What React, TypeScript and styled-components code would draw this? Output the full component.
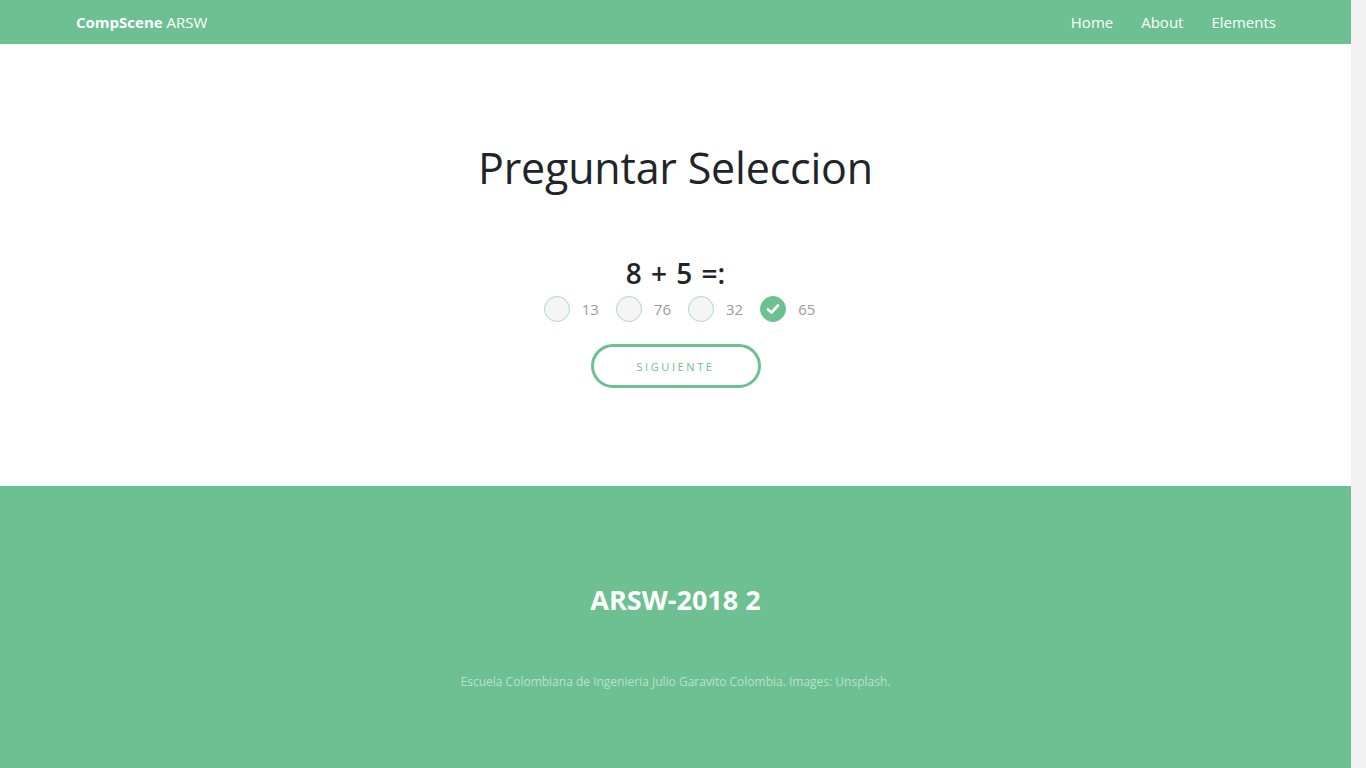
import React, { useState } from "react";
import styled, { createGlobalStyle } from "styled-components";

const green = "#6cc091";

const Global = createGlobalStyle`
  html { background: #f1f1f1; }
  html, body { margin: 0; padding: 0; }
  body {
    margin-right: 15px;
    font-family: "Open Sans", "Noto Sans", sans-serif;
    background: #fff;
    color: #212529;
  }
  * { box-sizing: border-box; }
`;

const Page = styled.div`
  display: flex;
  flex-direction: column;
  min-height: 813px;
`;

const Navbar = styled.header`
  height: 44px;
  background: ${green};
  display: flex;
  align-items: center;
  justify-content: space-between;
  padding: 0 75px 0 76px;
`;

const Brand = styled.a`
  color: #fff;
  font-size: 15px;
  text-decoration: none;
  b { font-weight: 700; }
`;

const NavList = styled.nav`
  display: flex;
  gap: 28px;
`;

const NavLink = styled.a`
  color: #fff;
  font-size: 15px;
  text-decoration: none;
`;

const Main = styled.main`
  height: 442px;
  display: flex;
  flex-direction: column;
  align-items: center;
  padding-top: 94px;
`;

const Title = styled.h1`
  margin: 0;
  font-size: 43px;
  font-weight: 500;
  line-height: 60px;
  letter-spacing: -0.2px;
`;

const Question = styled.h3`
  margin: 57px 0 0;
  font-size: 28px;
  font-weight: 600;
  line-height: 36px;
  word-spacing: 2px;
`;

const Options = styled.div`
  display: flex;
  gap: 17px;
  margin-top: 5px;
  padding-left: 8px;
`;

const Option = styled.label`
  display: flex;
  align-items: center;
  gap: 12px;
  cursor: pointer;
  font-size: 15px;
  color: #9a9a9a;
`;

const Circle = styled.span<{ $on: boolean }>`
  width: 26px;
  height: 26px;
  border-radius: 50%;
  border: 1px solid ${p => (p.$on ? green : "#a9dcbf")};
  background: ${p => (p.$on ? green : "#f5f5f5")};
  display: flex;
  align-items: center;
  justify-content: center;
`;

const NextButton = styled.button`
  margin-top: 22px;
  width: 170px;
  height: 44px;
  border: 3px solid ${green};
  border-radius: 22px;
  background: #fff;
  color: ${green};
  font-family: inherit;
  font-size: 11px;
  letter-spacing: 2.6px;
  text-transform: uppercase;
  cursor: pointer;
`;

const Footer = styled.footer`
  flex: 1;
  background: ${green};
  display: flex;
  flex-direction: column;
  align-items: center;
  padding-top: 94px;
`;

const FooterTitle = styled.h2`
  margin: 0;
  color: #fff;
  font-size: 27px;
  font-weight: 700;
  line-height: 40px;
`;

const Copy = styled.p`
  margin: 53px 0 0;
  color: rgba(255, 255, 255, 0.55);
  font-size: 12px;
`;

const options = ["13", "76", "32", "65"];

export default function App() {
  const [sel, setSel] = useState(3);
  return (
    <Page>
      <Global />
      <Navbar>
        <Brand href="#"><b>CompScene</b> ARSW</Brand>
        <NavList>
          <NavLink href="#">Home</NavLink>
          <NavLink href="#">About</NavLink>
          <NavLink href="#">Elements</NavLink>
        </NavList>
      </Navbar>
      <Main>
        <Title>Preguntar Seleccion</Title>
        <Question>8 + 5 =:</Question>
        <Options>
          {options.map((o, i) => (
            <Option key={o} onClick={() => setSel(i)}>
              <Circle $on={sel === i}>
                {sel === i && (
                  <svg width="14" height="12" viewBox="0 0 14 12">
                    <path d="M2 6.5 L5.5 9.5 L12 2.5" stroke="#fff" strokeWidth="2.6" fill="none" strokeLinecap="round" strokeLinejoin="round" />
                  </svg>
                )}
              </Circle>
              {o}
            </Option>
          ))}
        </Options>
        <NextButton>Siguiente</NextButton>
      </Main>
      <Footer>
        <FooterTitle>ARSW-2018 2</FooterTitle>
        <Copy>Escuela Colombiana de Ingenieria Julio Garavito Colombia. Images: Unsplash.</Copy>
      </Footer>
    </Page>
  );
}
